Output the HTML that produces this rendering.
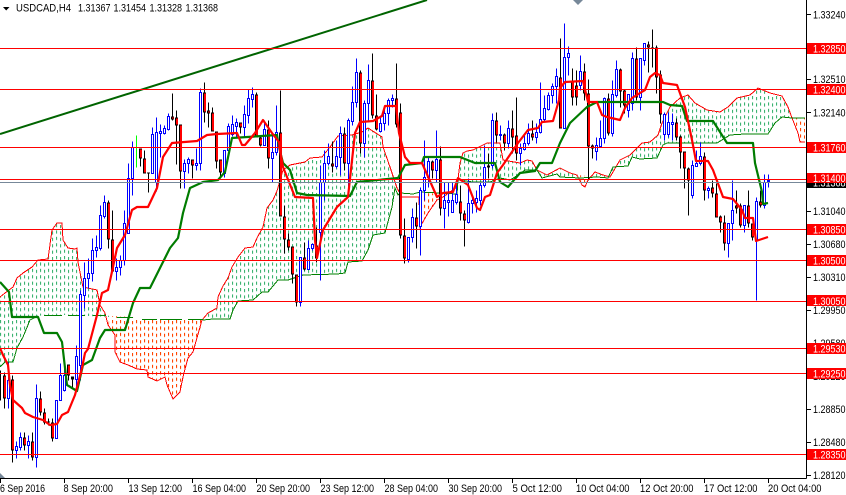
<!DOCTYPE html>
<html><head><meta charset="utf-8"><title>USDCAD,H4</title>
<style>
html,body{margin:0;padding:0;background:#fff;width:846px;height:495px;overflow:hidden}
svg{display:block;position:absolute;left:0;top:0}
text{font-family:"Liberation Sans",sans-serif;font-size:11px;fill:#000}
.w text,text.w{fill:#fff}
</style></head><body>
<svg width="846" height="495" viewBox="0 0 846 495" xmlns="http://www.w3.org/2000/svg">
<defs>
<pattern id="g" width="8" height="6.4" patternUnits="userSpaceOnUse"><rect x="0" y="0" width="1.1" height="3.2" fill="#3cb371"/><rect x="4" y="1" width="1.1" height="3.2" fill="#3cb371"/></pattern>
<pattern id="o" width="8" height="6.4" patternUnits="userSpaceOnUse"><rect x="0" y="0" width="1.1" height="3.2" fill="#ff4500"/><rect x="4" y="1" width="1.1" height="3.2" fill="#ff4500"/></pattern>
<clipPath id="c"><rect x="0" y="0" width="806" height="478"/></clipPath>
</defs>
<rect width="846" height="495" fill="#fff"/>
<g clip-path="url(#c)">
<!-- clouds -->
<g>
<polygon fill="url(#g)" points="0,297 5,293 13,287 17,278 23,273 32,267 38,260 48,259 52,230 57,223 62,223 63,240 68,248 75,249 77,248 78,262 83,287 97,290 100,305 105,313 110,317 68,315 45,315 38,316 30,320 23,337 17,348 13,362 5,362 0,367"/>
<polygon fill="url(#o)" points="110,316 133,317 140,320 203,320 193,352 188,358 185,369 183,377 180,392 173,399 167,385 165,377 157,381 148,377 147,370 137,369 128,365 120,362 115,352 115,335 108,325"/>
<polygon fill="url(#g)" points="203,320 208,313 217,308 218,297 223,286 228,278 232,267 238,257 245,248 253,247 257,238 263,227 267,208 273,200 277,191 283,170 290,165 305,162 310,158 322,157 330,147 338,136 352,135 362,132 368,128 382,137 383,147 390,167 397,188 395,188 392,207 385,233 373,235 368,250 362,261 348,262 345,273 337,274 303,275 288,280 278,280 268,292 262,292 253,300 238,301 233,310 230,319 213,319"/>
<polygon fill="url(#o)" points="420,193 452,194 443,197 437,200 428,213 420,227"/>
<polygon fill="url(#g)" points="452,194 457,187 460,163 463,153 467,151 473,150 487,143 500,143 503,160 520,163 527,160 532,161 537,170 547,175 560,168 570,173 577,175 580,178 560,177 557,174 542,178 537,170 525,170 515,177 510,180 500,178 490,182 473,182 458,180"/>
<polygon fill="url(#o)" points="577,175 597,177 588,180 585,187 582,185"/>
<polygon fill="url(#g)" points="590,177 595,172 603,175 610,177 620,160 630,155 642,143 650,142 658,135 662,123 670,107 680,98 688,95 695,103 707,110 720,112 728,107 737,98 750,95 758,88 770,93 782,96 788,107 792,118 782,117 775,123 768,134 745,134 730,135 717,143 667,143 663,145 657,158 640,159 632,157 628,166 613,167 608,178 597,177"/>
<polygon fill="url(#o)" points="792,118 805,118 805,142 800,142 798,133"/>
</g>
<g shape-rendering="crispEdges">
<!-- senkou A -->
<polyline fill="none" stroke="#ff0000" stroke-width="1" points="0,297 5,293 13,287 17,278 23,273 32,267 38,260 48,259 52,230 57,223 62,223 63,240 68,248 75,249 77,248 78,262 83,287 97,290 100,305 105,313 108,325 115,335 115,352 120,362 128,365 137,369 147,370 148,377 157,381 165,377 167,385 173,399 180,392 183,377 185,369 188,358 193,352 202,320 208,313 217,308 218,297 223,286 228,278 232,267 238,257 245,248 253,247 257,238 263,227 267,208 273,200 277,191 283,170 290,165 305,162 310,158 322,157 330,147 338,136 352,135 362,132 368,128 382,137 383,147 390,167 397,188 402,197 419,197 420,227 428,213 437,200 443,197 457,187 460,163 463,153 467,151 473,150 487,143 500,143 503,160 520,163 527,160 532,161 537,170 547,175 560,168 570,173 577,175 582,185 585,187 588,180 595,172 603,175 610,177 620,160 630,155 642,143 650,142 658,135 662,123 670,107 680,98 688,95 695,103 707,110 720,112 728,107 737,98 750,95 758,88 770,93 782,96 788,107 792,118 798,133 800,142 805,142"/>
<!-- senkou B -->
<polyline fill="none" stroke="#008000" stroke-width="1" points="0,367 5,362 13,362 17,348 23,337 30,320 38,316"/>
<path fill="none" stroke="#008000" stroke-width="1" d="M44 315.5H62M68 315.5H85M93 315.5H106M117 317.5H133M142 319.5H157M160 319.5H182M188 319.5H203"/>
<polyline fill="none" stroke="#008000" stroke-width="1" points="203,320 213,319 230,319 233,310 238,301 253,300 262,292 268,292 278,280 288,280 303,275 337,274 345,273 348,262 362,261 368,250 373,235 385,233 392,207 395,188 398,195 400,193 413,194 420,192 457,194 458,180 473,182 490,182 500,178 510,180 515,177 525,170 537,170 542,178 557,174 560,177 580,178 597,177 608,178 613,167 628,166 632,157 640,159 657,158 663,145 667,143 717,143 730,135 745,134 768,134 775,123 782,117 792,118 805,118"/>
</g>
<g transform="translate(0,.5)" shape-rendering="crispEdges">
<!-- blue wicks -->
<path fill="none" stroke="#0000ff" d="M8.5 362V408M16.5 441V458M20.5 432V450M28.5 435V458M36.5 384V467M56.5 400V438M60.5 363V400M64.5 368V391M76.5 345V388M80.5 290V380M84.5 262V308M88.5 258V288M92.5 238V281M96.5 235V257M100.5 205V250M104.5 195V218M116.5 258V280M120.5 255V275M124.5 210V265M128.5 163V233M132.5 141V195M152.5 127V173M156.5 117V191M160.5 124V157M164.5 125V134M168.5 113V130M184.5 159V188M188.5 157V173M196.5 148V170M200.5 88V170M224.5 150V177M228.5 123V150M232.5 115V136M236.5 118V137M244.5 105V136M248.5 89V123M252.5 87V107M264.5 120V145M272.5 135V182M276.5 105V155M300.5 257V306M308.5 240V269M312.5 243V250M320.5 165V280M324.5 150V200M328.5 143V165M336.5 140V168M340.5 126V175M348.5 118V187M352.5 86V125M356.5 58V107M364.5 100V157M368.5 64V122M380.5 115V132M384.5 107V130M388.5 98V125M392.5 94V107M408.5 237V262M412.5 208V242M420.5 187V255M424.5 140V200M428.5 157V187M436.5 130V182M444.5 182V228M448.5 182V216M452.5 182V212M456.5 180V204M468.5 178V223M472.5 195V213M476.5 190V212M480.5 182V205M484.5 145V187M492.5 113V168M500.5 125V140M508.5 120V148M520.5 143V165M524.5 135V150M528.5 123V145M536.5 123V143M540.5 82V133M544.5 95V122M548.5 92V110M552.5 83V103M556.5 68V103M564.5 23V128M568.5 46V75M580.5 55V90M596.5 137V160M600.5 120V146M604.5 97V143M612.5 80V136M616.5 60V97M628.5 94V117M632.5 52V110M640.5 58V110M644.5 43V65M664.5 112V140M668.5 112V137M672.5 113V140M692.5 160V198M696.5 150V166M700.5 142V165M708.5 186V198M728.5 223V257M732.5 180V240M744.5 205V232M756.5 197V300M764.5 174V208M768.5 174V187"/>
<!-- black wicks -->
<path fill="none" stroke="#000" d="M0.5 370V400M4.5 372V408M12.5 375V462M24.5 432V450M32.5 432V460M40.5 391V415M44.5 408V424M48.5 418V425M52.5 418V441M68.5 364V380M72.5 376V388M108.5 200V248M112.5 210V271M140.5 148V166M144.5 150V173M148.5 172V192M172.5 93V120M176.5 110V164M180.5 124V188M192.5 159V178M204.5 82V122M208.5 102V127M212.5 107V131M216.5 131V168M220.5 159V178M240.5 122V133M256.5 92V137M260.5 136V146M268.5 120V168M280.5 90V216M284.5 205V253M288.5 233V250M292.5 246V283M296.5 274V306M304.5 242V270M316.5 227V262M332.5 141V172M344.5 127V170M360.5 70V153M372.5 53V118M376.5 94V130M396.5 63V127M400.5 103V238M404.5 218V263M416.5 202V248M432.5 160V178M440.5 146V215M460.5 185V220M464.5 210V246M488.5 153V178M496.5 112V142M504.5 133V150M512.5 110V153M516.5 97V160M532.5 120V140M560.5 38V128M572.5 68V105M576.5 70V105M584.5 63V100M588.5 79V180M592.5 144V158M608.5 93V135M620.5 68V107M624.5 89V113M636.5 47V100M648.5 41V72M652.5 29V67M656.5 45V93M660.5 70V123M676.5 118V140M680.5 135V168M684.5 151V188M688.5 167V215M704.5 152V200M712.5 180V197M716.5 183V217M720.5 215V232M724.5 215V250M736.5 190V213M740.5 203V227M748.5 190V227M752.5 223V240M760.5 190V207"/>
<!-- lime bar -->
<path fill="none" stroke="#00ff00" d="M136.5 135V167"/>
<!-- blue bodies -->
<path fill="#fff" stroke="#0000ff" d="M7.5 380h2V398h-2zM15.5 446h2V450h-2zM19.5 437h2V447h-2zM27.5 441h2V445h-2zM35.5 398h2V457h-2zM55.5 400h2V438h-2zM59.5 375h2V400h-2zM63.5 375h2V390h-2zM75.5 356h2V379h-2zM79.5 294h2V365h-2zM83.5 278h2V295h-2zM87.5 273h2V278h-2zM91.5 250h2V273h-2zM95.5 247h2V250h-2zM99.5 215h2V248h-2zM103.5 202h2V216h-2zM115.5 267h2V271h-2zM119.5 260h2V267h-2zM123.5 223h2V260h-2zM127.5 178h2V233h-2zM131.5 147h2V178h-2zM151.5 134h2V173h-2zM155.5 132h2V182h-2zM159.5 131h2V133h-2zM163.5 128h2V133h-2zM167.5 116h2V129h-2zM183.5 163h2V171h-2zM187.5 159h2V163h-2zM195.5 163h2V165h-2zM199.5 92h2V163h-2zM223.5 150h2V173h-2zM227.5 126h2V150h-2zM231.5 124h2V134h-2zM235.5 122h2V126h-2zM243.5 114h2V127h-2zM247.5 98h2V115h-2zM251.5 94h2V99h-2zM263.5 129h2V145h-2zM271.5 152h2V158h-2zM275.5 132h2V152h-2zM299.5 257h2V302h-2zM307.5 248h2V269h-2zM311.5 244h2V248h-2zM319.5 182h2V232h-2zM323.5 163h2V182h-2zM327.5 156h2V163h-2zM335.5 156h2V166h-2zM339.5 133h2V157h-2zM347.5 120h2V163h-2zM351.5 102h2V121h-2zM355.5 72h2V102h-2zM363.5 103h2V143h-2zM367.5 80h2V103h-2zM379.5 123h2V131h-2zM383.5 113h2V123h-2zM387.5 100h2V113h-2zM391.5 98h2V100h-2zM407.5 237h2V259h-2zM411.5 217h2V237h-2zM419.5 190h2V226h-2zM423.5 177h2V190h-2zM427.5 161h2V177h-2zM435.5 159h2V170h-2zM443.5 200h2V208h-2zM447.5 200h2V202h-2zM451.5 200h2V212h-2zM455.5 194h2V202h-2zM467.5 203h2V222h-2zM471.5 200h2V203h-2zM475.5 198h2V202h-2zM479.5 185h2V200h-2zM483.5 167h2V185h-2zM491.5 120h2V165h-2zM499.5 134h2V135h-2zM507.5 128h2V143h-2zM519.5 148h2V153h-2zM523.5 143h2V149h-2zM527.5 133h2V143h-2zM535.5 132h2V137h-2zM539.5 119h2V132h-2zM543.5 108h2V119h-2zM547.5 95h2V109h-2zM551.5 86h2V95h-2zM555.5 76h2V86h-2zM563.5 57h2V128h-2zM567.5 53h2V57h-2zM579.5 71h2V85h-2zM595.5 145h2V151h-2zM599.5 138h2V146h-2zM603.5 98h2V138h-2zM611.5 94h2V133h-2zM615.5 69h2V95h-2zM627.5 94h2V110h-2zM631.5 58h2V103h-2zM639.5 58h2V97h-2zM643.5 43h2V60h-2zM663.5 114h2V134h-2zM667.5 122h2V134h-2zM671.5 122h2V124h-2zM691.5 165h2V195h-2zM695.5 163h2V166h-2zM699.5 156h2V163h-2zM707.5 188h2V190h-2zM727.5 223h2V243h-2zM731.5 210h2V223h-2zM743.5 205h2V225h-2zM755.5 201h2V240h-2zM763.5 182h2V205h-2zM767.5 180h2V181h-2z"/>
<!-- red bodies -->
<path fill="none" stroke="#000" stroke-width="3" d="M4.5 375V398M12.5 379V450M24.5 437V445M32.5 441V457M40.5 398V412M44.5 412V422M48.5 421V422M52.5 422V438M68.5 364V375M72.5 376V379M108.5 202V239M112.5 239V271M140.5 148V158M144.5 158V173M148.5 172V173M172.5 116V119M176.5 117V125M180.5 124V171M192.5 159V165M204.5 92V112M208.5 110V113M212.5 112V131M216.5 131V161M220.5 159V172M240.5 122V127M256.5 94V137M260.5 137V145M268.5 129V158M280.5 132V216M284.5 216V239M288.5 239V247M292.5 246V274M296.5 274V302M304.5 257V269M316.5 245V258M332.5 163V166M344.5 133V163M360.5 72V143M372.5 80V115M376.5 115V129M396.5 98V124M400.5 112V235M404.5 235V258M416.5 217V226M432.5 161V170M440.5 159V208M460.5 201V213M464.5 213V220M488.5 165V167M496.5 120V135M504.5 134V143M512.5 128V137M516.5 135V153M532.5 133V137M560.5 77V128M572.5 80V97M576.5 85V97M584.5 71V93M588.5 93V146M592.5 145V148M608.5 98V133M620.5 69V91M624.5 90V105M636.5 58V97M648.5 44V47M652.5 47V48M656.5 47V77M660.5 74V114M676.5 122V137M680.5 136V152M684.5 151V168M688.5 168V180M704.5 156V190M712.5 187V193M716.5 193V217M720.5 216V222M724.5 222V243M736.5 205V208M740.5 205V225M748.5 205V223M752.5 223V237M760.5 201V205"/>
<path fill="none" stroke="#ff0000" stroke-width="2" transform="translate(.5,0)" d="M4.5 376V397M12.5 380V449M24.5 438V444M32.5 442V456M40.5 399V411M44.5 413V421M52.5 423V437M68.5 365V374M108.5 203V238M112.5 240V270M140.5 149V157M144.5 159V172M172.5 117V118M176.5 118V124M180.5 125V170M192.5 160V164M204.5 93V111M208.5 111V112M212.5 113V130M216.5 132V160M220.5 160V171M240.5 123V126M256.5 95V136M260.5 138V144M268.5 130V157M280.5 133V215M284.5 217V238M288.5 240V246M292.5 247V273M296.5 275V301M304.5 258V268M316.5 246V257M332.5 164V165M344.5 134V162M360.5 73V142M372.5 81V114M376.5 116V128M396.5 99V123M400.5 113V234M404.5 236V257M416.5 218V225M432.5 162V169M440.5 160V207M460.5 202V212M464.5 214V219M496.5 121V134M504.5 135V142M512.5 129V136M516.5 136V152M532.5 134V136M560.5 78V127M572.5 81V96M576.5 86V96M584.5 72V92M588.5 94V145M592.5 146V147M608.5 99V132M620.5 70V90M624.5 91V104M636.5 59V96M648.5 45V46M656.5 48V76M660.5 75V113M676.5 123V136M680.5 137V151M684.5 152V167M688.5 169V179M704.5 157V189M712.5 188V192M716.5 194V216M720.5 217V221M724.5 223V242M736.5 206V207M740.5 206V224M748.5 206V222M752.5 224V236M760.5 202V204"/>
</g>
<g fill="none">
<!-- trend line -->
<polyline stroke="#006400" stroke-width="2" points="0,134 427,0"/>
<!-- kijun -->
<polyline stroke="#007c00" stroke-width="2.2" stroke-linejoin="round" points="0,282 9,292 12,317 38,317 44,333 57,333 62,342 67,385 77,391 83,365 92,360 100,338 105,330 125,330 133,303 140,288 150,288 160,268 170,248 178,238 183,213 190,188 203,182 218,180 225,172 232,138 277,135 279,147 283,163 290,170 297,193 307,195 350,196 357,182 398,178 405,165 422,163 424,157 460,157 475,163 495,163 500,182 508,187 520,173 535,171 540,163 552,163 560,143 570,123 587,107 597,102 663,102 670,105 682,106 687,121 713,121 727,143 753,143 755,163 762,192 763,204 768,203"/>
<!-- tenkan -->
<polyline stroke="#ff0000" stroke-width="2.2" stroke-linejoin="round" points="0,348 3,355 8,365 10,385 13,400 22,408 25,413 33,417 43,420 50,425 57,424 62,415 68,412 75,395 82,368 85,353 88,349 97,315 102,293 108,290 113,267 117,248 125,235 132,210 137,207 148,207 157,188 163,157 172,143 197,141 207,135 217,134 237,133 242,145 245,145 255,133 263,120 272,133 279,142 280,150 283,167 295,197 313,198 315,240 317,258 323,230 337,207 348,197 355,133 360,122 373,121 382,116 385,106 396,106 399,133 405,157 410,163 422,163 437,197 443,193 453,192 458,178 468,185 477,208 480,210 485,197 490,195 497,173 503,165 518,143 528,130 538,128 542,122 553,121 559,100 560,88 565,82 583,81 588,102 597,102 602,115 607,117 620,120 625,108 632,98 640,93 645,90 650,77 655,73 660,75 663,83 677,85 685,107 692,140 696,161 708,161 713,170 723,197 733,199 742,210 745,218 753,218 756,241 762,239 768,237"/>
</g>
<g shape-rendering="crispEdges" fill="none">
<!-- horizontal levels -->
<path stroke="#778899" d="M0 182.5H806"/>
<path stroke="#ff0000" d="M0 48.5H806M0 89.5H806M0 147.5H806M0 179.5H806M0 229.5H806M0 260.5H806M0 301.5H806M0 348.5H806M0 373.5H806M0 454.5H806"/>
</g>
<polygon points="573,0 583,0 578,5" fill="#778899"/>
<polygon points="0,473 5,478 0,478" fill="#778899"/>
</g>
<!-- header -->
<polygon points="3,7 9.5,7 6.2,10.5" fill="#000"/>
<text x="16" y="11.5" textLength="55" lengthAdjust="spacingAndGlyphs">USDCAD,H4</text>
<text x="78" y="11.5" textLength="32.5" lengthAdjust="spacingAndGlyphs">1.31367</text>
<text x="113.5" y="11.5" textLength="32.5" lengthAdjust="spacingAndGlyphs">1.31454</text>
<text x="149.5" y="11.5" textLength="32.5" lengthAdjust="spacingAndGlyphs">1.31328</text>
<text x="185.5" y="11.5" textLength="32.5" lengthAdjust="spacingAndGlyphs">1.31368</text>
<!-- axes -->
<path shape-rendering="crispEdges" fill="none" stroke="#000" d="M806.5 0V478.5M0 478.5H806.5M807 14.5H811M807 79.5H811M807 112.5H811M807 145.5H811M807 178.5H811M807 211.5H811M807 244.5H811M807 277.5H811M807 310.5H811M807 343.5H811M807 376.5H811M807 409.5H811M807 442.5H811M807 475.5H811M0.5 479V483M64.5 479V483M128.5 479V483M192.5 479V483M256.5 479V483M320.5 479V483M384.5 479V483M448.5 479V483M512.5 479V483M576.5 479V483M640.5 479V483M704.5 479V483M768.5 479V483"/>
<!-- right axis prices -->
<text x="813" y="18.5" textLength="32.5" lengthAdjust="spacingAndGlyphs">1.33240</text>
<text x="813" y="83" textLength="32.5" lengthAdjust="spacingAndGlyphs">1.32510</text>
<text x="813" y="116.5" textLength="32.5" lengthAdjust="spacingAndGlyphs">1.32140</text>
<text x="813" y="215" textLength="32.5" lengthAdjust="spacingAndGlyphs">1.31040</text>
<text x="813" y="248" textLength="32.5" lengthAdjust="spacingAndGlyphs">1.30680</text>
<text x="813" y="281" textLength="32.5" lengthAdjust="spacingAndGlyphs">1.30310</text>
<text x="813" y="314" textLength="32.5" lengthAdjust="spacingAndGlyphs">1.29950</text>
<text x="813" y="347" textLength="32.5" lengthAdjust="spacingAndGlyphs">1.29580</text>
<text x="813" y="380" textLength="32.5" lengthAdjust="spacingAndGlyphs">1.29220</text>
<text x="813" y="413" textLength="32.5" lengthAdjust="spacingAndGlyphs">1.28850</text>
<text x="813" y="446" textLength="32.5" lengthAdjust="spacingAndGlyphs">1.28480</text>
<text x="813" y="479" textLength="32.5" lengthAdjust="spacingAndGlyphs">1.28120</text>
<rect x="807" y="177" width="39" height="11" fill="#000"/>
<text class="w" x="813" y="186.5" textLength="32.5" lengthAdjust="spacingAndGlyphs">1.31368</text>
<g shape-rendering="crispEdges" fill="#ff0000">
<rect x="807" y="43" width="39" height="11"/>
<rect x="807" y="84" width="39" height="11"/>
<rect x="807" y="142" width="39" height="11"/>
<rect x="807" y="173" width="39" height="10"/>
<rect x="807" y="224" width="39" height="11"/>
<rect x="807" y="255" width="39" height="11"/>
<rect x="807" y="295" width="39" height="11"/>
<rect x="807" y="343" width="39" height="11"/>
<rect x="807" y="368" width="39" height="11"/>
<rect x="807" y="449" width="39" height="11"/>
</g>
<g class="w">
<text x="813" y="52.5" textLength="32.5" lengthAdjust="spacingAndGlyphs">1.32850</text>
<text x="813" y="93.5" textLength="32.5" lengthAdjust="spacingAndGlyphs">1.32400</text>
<text x="813" y="151.5" textLength="32.5" lengthAdjust="spacingAndGlyphs">1.31760</text>
<text x="813" y="182" textLength="32.5" lengthAdjust="spacingAndGlyphs">1.31400</text>
<text x="813" y="233.5" textLength="32.5" lengthAdjust="spacingAndGlyphs">1.30850</text>
<text x="813" y="264.5" textLength="32.5" lengthAdjust="spacingAndGlyphs">1.30500</text>
<text x="813" y="305" textLength="32.5" lengthAdjust="spacingAndGlyphs">1.30050</text>
<text x="813" y="352.5" textLength="32.5" lengthAdjust="spacingAndGlyphs">1.29530</text>
<text x="813" y="377.5" textLength="32.5" lengthAdjust="spacingAndGlyphs">1.29250</text>
<text x="813" y="458.5" textLength="32.5" lengthAdjust="spacingAndGlyphs">1.28350</text>
</g>
<!-- time axis -->
<text x="0" y="492" textLength="45" lengthAdjust="spacingAndGlyphs">6 Sep 2016</text>
<text x="63.5" y="492" textLength="49.5" lengthAdjust="spacingAndGlyphs">8 Sep 20:00</text>
<text x="128.5" y="492" textLength="53.5" lengthAdjust="spacingAndGlyphs">13 Sep 12:00</text>
<text x="192.5" y="492" textLength="53.5" lengthAdjust="spacingAndGlyphs">16 Sep 04:00</text>
<text x="256.5" y="492" textLength="53.5" lengthAdjust="spacingAndGlyphs">20 Sep 20:00</text>
<text x="320.5" y="492" textLength="53.5" lengthAdjust="spacingAndGlyphs">23 Sep 12:00</text>
<text x="384.5" y="492" textLength="53.5" lengthAdjust="spacingAndGlyphs">28 Sep 04:00</text>
<text x="448.5" y="492" textLength="53.5" lengthAdjust="spacingAndGlyphs">30 Sep 20:00</text>
<text x="512.5" y="492" textLength="49.5" lengthAdjust="spacingAndGlyphs">5 Oct 12:00</text>
<text x="576" y="492" textLength="53.5" lengthAdjust="spacingAndGlyphs">10 Oct 04:00</text>
<text x="640" y="492" textLength="53.5" lengthAdjust="spacingAndGlyphs">12 Oct 20:00</text>
<text x="704" y="492" textLength="53.5" lengthAdjust="spacingAndGlyphs">17 Oct 12:00</text>
<text x="768" y="492" textLength="53.5" lengthAdjust="spacingAndGlyphs">20 Oct 04:00</text>
</svg>
</body></html>
